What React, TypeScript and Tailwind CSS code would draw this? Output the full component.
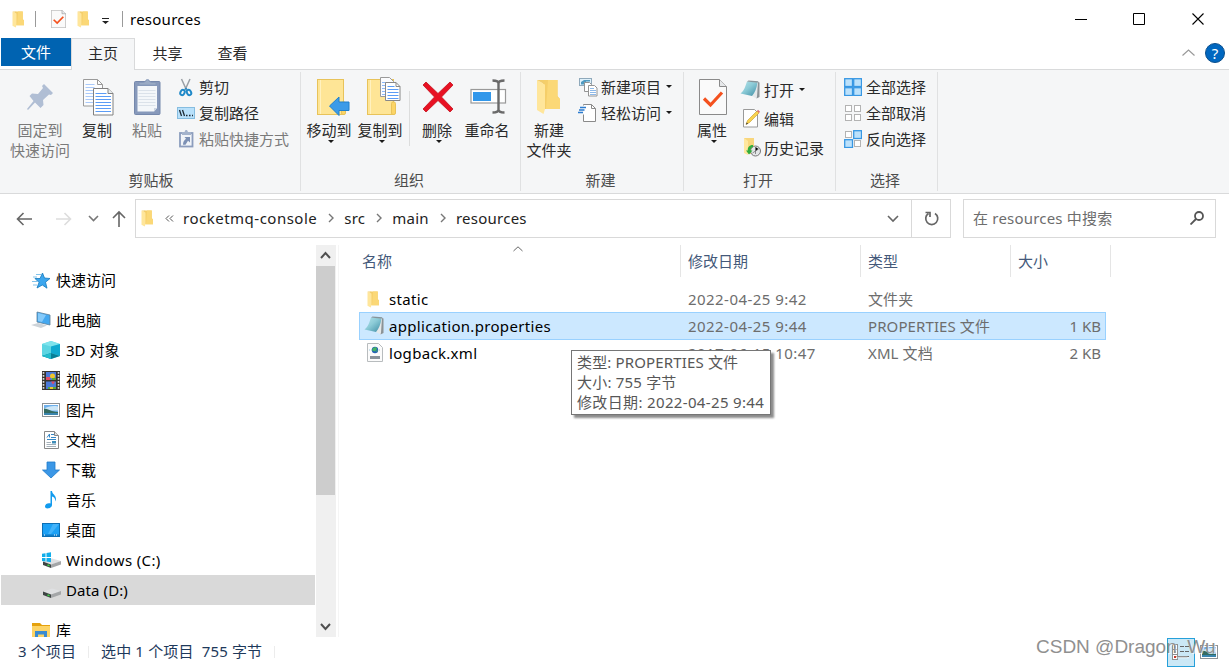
import type { ReactNode } from 'react';
import clsx from 'clsx';

const FolderIcon = ({ className }: { className?: string }) => (
  <svg viewBox="0 0 26 36" preserveAspectRatio="none" className={className}>
    <path d="M7 1h14.5v16l2.500 3v10H7z" fill="#f5ce69" />
    <path d="M12 1h9.500v17l2.500 2v10H10z" fill="#fbd877" />
    <path d="M1 1l8 4.500V30L7.500 35 1 31z" fill="#ffe69b" />
    <path d="M1 1h7l1 4.500z" fill="#f2cd6c" />
  </svg>
);

const PageCheckIcon = ({ className }: { className?: string }) => (
  <svg viewBox="0 0 28 36" preserveAspectRatio="none" className={className}>
    <path d="M.5.500h20l7 7v28H.5z" fill="#fafafa" stroke="#8a8a8a" />
    <path d="M20.500.500v7h7" fill="#e6e8ea" stroke="#8a8a8a" />
    <path d="M5 19.500l6.500 6.500L23 13.500" fill="none" stroke="#f4511e" strokeWidth="3.200" />
  </svg>
);

const PinIcon = () => (
  <svg width="28" height="28" viewBox="0 0 28 28">
    <path d="M18 1l9 9-2 2-2-.5-6 5.500.5 5-3 3-5.500-5.500L2 27l-1-1 6.500-8L3.500 13l2.500-2.500 6 .5L17 5l-1-2z" fill="#b0bed4" />
  </svg>
);

const SheetLines = ({ x, y, w, n, color = '#5b9cf6' }: { x: number; y: number; w: number; n: number; color?: string }) => (
  <>
    {Array.from({ length: n }, (_, i) => (
      <path key={i} d={`M${x} ${y + i * 3}h${w}`} stroke={color} />
    ))}
  </>
);

const CopyIcon = () => (
  <svg width="32" height="38" viewBox="0 0 32 38" fill="none" className="relative left-[2px] top-px">
    <path d="M.5.500h14l5 5v21.500H.5z" fill="#fcfdfe" stroke="#9a9a9a" />
    <path d="M14.500.500v5h5" stroke="#9a9a9a" />
    <SheetLines x={2.5} y={5.5} w={9} n={7} color="#a9c9fa" />
    <path d="M10.500 9.500h14.500l5 5V36H10.500z" fill="#fff" stroke="#808080" />
    <path d="M25 9.500v5h5" fill="#e8ecef" stroke="#808080" />
    <SheetLines x={12.5} y={14.5} w={11} n={1} />
    <SheetLines x={12.5} y={17.5} w={15.5} n={6} />
  </svg>
);

const PasteIcon = () => (
  <svg width="28" height="38" viewBox="0 0 28 38" className="relative left-px">
    <rect x=".5" y="3.500" width="25.500" height="33" rx="1" fill="#8799bb" stroke="#7588ac" />
    <path d="M3.500 8h19.500v22l-3 3.500H3.500z" fill="#f4f7fa" />
    <path d="M20 33.500V30h3z" fill="#cdd6e2" />
    <SheetLines x={4.5} y={12.5} w={17} n={6} color="#dbe2ea" />
    <path d="M5 7V4.500h4.500l2-1a2 2 0 1 1 4 0l2 1H22V7z" fill="#9aabc5" stroke="#8497b8" strokeWidth=".8" />
  </svg>
);

const CutIcon = () => (
  <svg width="18" height="19" viewBox="0 0 18 19" fill="none">
    <path d="M4.500 1l5 11M13 1L8 12" stroke="#9a9fa5" strokeWidth="1.500" />
    <ellipse cx="5.500" cy="14.500" rx="2" ry="2.800" transform="rotate(28 5.500 14.500)" stroke="#2089c8" strokeWidth="2" />
    <ellipse cx="12" cy="14.500" rx="2" ry="2.800" transform="rotate(-28 12 14.500)" stroke="#2089c8" strokeWidth="2" />
    <path d="M7 11.500l2-2 2 2z" fill="#2089c8" />
  </svg>
);

const CopyPathIcon = () => (
  <svg width="18" height="12" viewBox="0 0 18 12" fill="none">
    <rect x=".5" y=".5" width="17" height="11" fill="#b9e1fb" stroke="#86bde0" />
    <path d="M2.500 3l2 6M5.500 3l2 6M9 8.500h1.500M12 8.500h1.500M15 8.500h1" stroke="#1d2a35" strokeWidth="1.300" />
  </svg>
);

const PasteShortcutIcon = () => (
  <svg width="15" height="19" viewBox="0 0 15 19" className="relative -top-px">
    <rect x="1" y="4" width="12.500" height="13.500" fill="#f1f4f8" stroke="#8c9dbd" strokeWidth="1.800" />
    <path d="M3 3h2.500l1-2h1.500l1 2H12v3H3z" fill="#a4b3cc" />
    <path d="M5.500 8h5.500v5.500l-2-1.700-2.500 4H4c0-3 1-4.500 3-6z" fill="#7c90b4" />
  </svg>
);

const FolderBack = () => (
  <>
    <rect x=".5" y="2.500" width="26" height="35" fill="#fee596" stroke="#e8c35a" />
    <path d="M3.500 3v34" stroke="#fff1bf" />
    <rect x="24.500" y="25" width="4" height="12.500" rx="1.500" fill="#fcd567" stroke="#e8c35a" />
  </>
);

const MoveToIcon = () => (
  <svg width="34" height="39" viewBox="0 0 34 39" className="relative -top-[1px] left-[5px]">
    <FolderBack />
    <path d="M12.500 29L22 20v5h10v8.500H22v5z" fill="#3c9be8" stroke="#2180cc" />
  </svg>
);

const CopyToIcon = () => (
  <svg width="34" height="39" viewBox="0 0 34 39" fill="none" className="relative -top-[1px] left-[4px]">
    <FolderBack />
    <path d="M13.500.500h9l4 4V19.500h-13z" fill="#fbfcfe" stroke="#9a9a9a" />
    <SheetLines x={15} y={5.5} w={4} n={5} color="#8db9f8" />
    <path d="M18.500 5.500H29l4 4v14H18.500z" fill="#fff" stroke="#888" />
    <path d="M29 5.500v4h4" stroke="#888" />
    <SheetLines x={20.5} y={9.5} w={7} n={1} />
    <SheetLines x={20.5} y={12.5} w={11} n={4} />
  </svg>
);

const DeleteIcon = () => (
  <svg width="32" height="32" viewBox="0 0 32 32" className="relative left-px">
    <path d="M1 4l3-3 12 11.500L28 1l3 3-11.500 12L31 28l-3 3-12-11.500L4 31l-3-3 11.500-12z" fill="#e81123" stroke="#c4101c" strokeWidth=".8" />
  </svg>
);

const RenameIcon = () => (
  <svg width="37" height="35" viewBox="0 0 37 35" fill="none" className="relative -top-px left-px">
    <rect x="1" y="10.500" width="34.500" height="13.500" fill="#fff" stroke="#999" strokeWidth="1.200" />
    <rect x="3" y="13" width="18" height="9" fill="#3197ea" />
    <path d="M28.500 3v29M22.500 1.500c3 0 6 .5 6 3 0-2.500 3-3 6-3M22.500 33.500c3 0 6-.5 6-3 0 2.500 3 3 6 3" stroke="#6a6a6a" strokeWidth="2.400" />
  </svg>
);

const NewItemIcon = () => (
  <svg width="19" height="19" viewBox="0 0 19 19" fill="none" className="shrink-0">
    <rect x=".5" y=".5" width="12" height="7" fill="#dff1fb" stroke="#8fa9bb" />
    <path d="M2 6.500V4l3-2h6v1.500H7v3z" fill="#4f9ac0" />
    <path d="M5.500 4.500h5l2 2v7h-7z" fill="#fff" stroke="#949494" />
    <path d="M9.500 7.500h6l2.500 2.500v8H9.500z" fill="#fff" stroke="#949494" />
    <path d="M11 10.500h4M11 12.500h6M11 14.500h6M11 16.500h6" stroke="#8db9e8" />
  </svg>
);

const EasyAccessIcon = () => (
  <svg width="19" height="19" viewBox="0 0 19 19" fill="none" className="relative -left-px shrink-0">
    <path d="M5.500 1.500v-1h8l4 4v13h-12v-7" fill="#fff" stroke="#8a8a8a" />
    <path d="M13.500.500v4h4" stroke="#8a8a8a" />
    <path d="M2 3.500h6M1 6h5.500M0 8.500h5" stroke="#2d7cd0" strokeWidth="1.400" />
  </svg>
);

const NotepadIcon = () => (
  <svg width="20" height="19" viewBox="0 0 20 19" className="relative -left-px shrink-0">
    <defs>
      <linearGradient id="notepad" x1="0" y1="0" x2="1" y2="1">
        <stop offset="0" stopColor="#b5e3ea" />
        <stop offset=".45" stopColor="#8ccbd7" />
        <stop offset="1" stopColor="#3d8ca3" />
      </linearGradient>
    </defs>
    <path d="M15 2l4 .5v14.500l-2.500 1.500L12 16z" fill="#e4e8ea" />
    <path d="M18 2l1.500.5v14.500l-3 1.500.5-2z" fill="#8b9296" />
    <path d="M7 1.500l10.500 1C16.500 8.500 15 12.500 12 16L.5 13.500C4.500 10.500 5.500 5.500 7 1.500z" fill="url(#notepad)" />
    <path d="M7 1.500L8.500.500 18.500 1.200 17.500 2.700z" fill="#85949a" />
  </svg>
);

const EditIcon = () => (
  <svg width="18" height="19" viewBox="0 0 18 19" className="relative left-px">
    <path d="M.5.500h11l3 3V18H.5z" fill="#fff" stroke="#9a9a9a" />
    <path d="M3 15.500l1.500-4L14 2l2 2-9.500 9.500z" fill="#f9d24e" stroke="#c39b2b" strokeWidth=".6" />
    <path d="M14 2l1-1.200 2 2L16 4z" fill="#dc6e6e" />
    <path d="M3 15.500l.7-2 1.400 1.300z" fill="#333" />
  </svg>
);

const HistoryIcon = () => (
  <svg width="18" height="19" viewBox="0 0 18 19" className="relative left-px">
    <path d="M1 0h10v16H5l-4-2z" fill="#f8d67d" />
    <path d="M1 0l4 3v14l-4-2z" fill="#ffe79f" />
    <circle cx="12.500" cy="13" r="5" fill="#e3e6e8" stroke="#787878" />
    <path d="M12.500 9v4l3-2M12.500 13l-3 2M12.500 13v3" stroke="#666" strokeWidth=".7" />
    <path d="M10 7c-4 0-5.500 2.500-5.200 5.500H3l3 4 3.500-4H7.500c0-2 .8-3 2.500-3.500z" fill="#30ad3e" />
  </svg>
);

const SelectIcon = ({ on }: { on: boolean[] }) => (
  <svg width="18" height="18" viewBox="0 0 18 18">
    {on.map((active, i) => (
      <rect
        key={i}
        x={(i % 2) * 9 + (active ? 0.7 : 1.5)}
        y={Math.floor(i / 2) * 9 + (active ? 0.7 : 1.5)}
        width={active ? 7.8 : 6}
        height={active ? 7.8 : 6}
        fill={active ? '#bce1fb' : '#fff'}
        stroke={active ? '#3797e3' : '#b3b3b3'}
        strokeWidth={active ? 1.3 : 1}
      />
    ))}
  </svg>
);

const Caret = ({ className }: { className?: string }) => (
  <svg width="6" height="3" viewBox="0 0 6 3" className={className}>
    <path d="M0 0h6L3 3z" fill="#1a1a1a" />
  </svg>
);

type LineProps = { d: string; w: number; h: number; color?: string; stroke?: number; className?: string };

const Line = ({ d, w, h, color = '#5f5f5f', stroke = 1.6, className }: LineProps) => (
  <svg width={w} height={h} viewBox={`0 0 ${w} ${h}`} fill="none" className={clsx('shrink-0', className)}>
    <path d={d} stroke={color} strokeWidth={stroke} />
  </svg>
);

type BigButtonProps = { icon: ReactNode; lines: string[]; className: string; disabled?: boolean; caret?: boolean };

const BigButton = ({ icon, lines, className, disabled, caret }: BigButtonProps) => (
  <button className={clsx('flex shrink-0 flex-col items-center whitespace-nowrap pt-[7px]', disabled && 'text-[#7a7a7a]', className)}>
    <span className="mb-[3px] flex h-10 items-center justify-center">{icon}</span>
    {lines.map((line) => (
      <span key={line} className="h-5 leading-5">{line}</span>
    ))}
    {caret && <Caret className="ml-1" />}
  </button>
);

type SmallButtonProps = { icon: ReactNode; label: string; caret?: boolean; disabled?: boolean; className?: string };

const SmallButton = ({ icon, label, caret, disabled, className = 'h-[26px]' }: SmallButtonProps) => (
  <button className={clsx('flex items-center whitespace-nowrap', disabled && 'text-[#7a7a7a]', className)}>
    <span className="mr-1 flex w-[18px] shrink-0 justify-center">{icon}</span>
    {label}
    {caret && <Caret className="mb-px ml-[5px]" />}
  </button>
);

const Group = ({ label, className, labelClass, children }: { label: string; className: string; labelClass?: string; children: ReactNode }) => (
  <div className={clsx('relative flex shrink-0 flex-col', className)}>
    <div className="flex h-[100px]">{children}</div>
    <div className={clsx('text-center leading-5 text-[#4c4c4c]', labelClass)}>{label}</div>
    <div className="absolute top-[2px] right-0 h-[119px] w-px bg-[#e0e1e2]" />
  </div>
);

const Ribbon = () => (
  <div className="flex h-[125px] border-y border-[#d9dadb] bg-[#f5f6f7] pl-px text-[#2a2a2a]">
    <Group label="剪贴板" className="w-[300px]">
      <BigButton icon={<PinIcon />} lines={['固定到', '快速访问']} className="ml-1 w-[70px]" disabled />
      <BigButton icon={<CopyIcon />} lines={['复制']} className="w-[44px]" />
      <BigButton icon={<PasteIcon />} lines={['粘贴']} className="ml-[3px] w-[50px]" disabled />
      <div className="ml-[5px] pt-1">
        <SmallButton icon={<CutIcon />} label="剪切" />
        <SmallButton icon={<CopyPathIcon />} label="复制路径" />
        <SmallButton icon={<PasteShortcutIcon />} label="粘贴快捷方式" disabled />
      </div>
    </Group>
    <Group label="组织" className="w-[220px]" labelClass="pr-1">
      <BigButton icon={<MoveToIcon />} lines={['移动到']} className="ml-1 w-[48px]" caret />
      <BigButton icon={<CopyToIcon />} lines={['复制到']} className="ml-[3px] w-[48px]" caret />
      <div className="mt-[21px] ml-[5px] h-[55px] w-px bg-[#dcdddd]" />
      <BigButton icon={<DeleteIcon />} lines={['删除']} className="ml-[5px] w-[44px]" caret />
      <BigButton icon={<RenameIcon />} lines={['重命名']} className="ml-[3px] w-[50px]" />
    </Group>
    <Group label="新建" className="w-[163px]" labelClass="pr-1">
      <BigButton icon={<FolderIcon className="h-9 w-[26px]" />} lines={['新建', '文件夹']} className="ml-[2px] w-[52px]" />
      <div className="ml-1 pt-1">
        <SmallButton icon={<NewItemIcon />} label="新建项目" caret />
        <SmallButton icon={<EasyAccessIcon />} label="轻松访问" caret />
      </div>
    </Group>
    <Group label="打开" className="w-[152px]" labelClass="pr-1">
      <BigButton icon={<PageCheckIcon className="relative left-px h-9 w-7" />} lines={['属性']} className="ml-[3px] w-[50px]" caret />
      <div className="ml-[5px] pt-[5px]">
        <SmallButton icon={<NotepadIcon />} label="打开" caret className="h-[29px]" />
        <SmallButton icon={<EditIcon />} label="编辑" className="h-[29px]" />
        <SmallButton icon={<HistoryIcon />} label="历史记录" className="h-[29px]" />
      </div>
    </Group>
    <Group label="选择" className="w-[102px]" labelClass="pr-1">
      <div className="ml-2 pt-1">
        <SmallButton icon={<SelectIcon on={[true, true, true, true]} />} label="全部选择" />
        <SmallButton icon={<SelectIcon on={[false, false, false, false]} />} label="全部取消" />
        <SmallButton icon={<SelectIcon on={[false, true, true, false]} />} label="反向选择" />
      </div>
    </Group>
  </div>
);

const TitleBar = () => (
  <header className="flex h-[38px] items-center pl-3">
    <FolderIcon className="h-[17px] w-[13px]" />
    <i className="ml-[10px] h-4 w-px bg-[#9a9a9a]" />
    <PageCheckIcon className="ml-[15px] h-[18px] w-[15px]" />
    <FolderIcon className="ml-[11px] h-[17px] w-[13px]" />
    <svg width="7" height="6" viewBox="0 0 7 6" className="mt-1 ml-[12px]">
      <path d="M0 0h7v1H0zM0 3h7L3.500 6z" fill="#222" />
    </svg>
    <i className="ml-[13px] h-4 w-px bg-[#9a9a9a]" />
    <span className="ml-[7px] tracking-[0.25px] text-black">resources</span>
    <div className="ml-auto flex items-center">
      <Line d="M0 .5h12" w={12} h={1} stroke={1} color="#000" />
      <Line d="M.5.500h11v11H.5z" w={12} h={12} stroke={1} color="#000" className="ml-[46px]" />
      <Line d="M.5.500l11 11M11.500.500l-11 11" w={12} h={12} stroke={1.1} color="#000" className="mr-[25px] ml-[47px]" />
    </div>
  </header>
);

const Tabs = () => (
  <nav className="flex h-[31px] pl-px text-[#2a2a2a]">
    <div className="h-[28px] w-[70px] bg-[#0063b1] text-center leading-[29px] text-white">文件</div>
    <div className="relative z-10 h-8 w-[64px] border border-b-0 border-[#d9dadb] bg-[#f5f6f7] text-center leading-[29px]">主页</div>
    <div className="w-[65px] text-center leading-[30px]">共享</div>
    <div className="w-[65px] text-center leading-[30px]">查看</div>
    <div className="ml-auto flex h-[29px] items-center pr-1">
      <Line d="M.5 6.500L6.500 1l6 5.500" w={13} h={8} stroke={1.2} color="#999" className="mr-[10px]" />
      <span className="flex size-5 items-center justify-center rounded-full border border-[#0b4f8c] bg-[#0067c0] text-[15px] leading-5 text-white">?</span>
    </div>
  </nav>
);

const crumbs = ['rocketmq-console', 'src', 'main', 'resources'];

const AddressBar = () => (
  <div className="flex h-[51px] items-start pt-[5px] pl-4">
    <div className="flex h-[39px] w-[119px] items-center">
      <Line d="M16 8H1.500M7.500 2l-6 6 6 6" w={16} h={16} color="#666" />
      <Line d="M0 8h14.500M8.500 2l6 6-6 6" w={16} h={16} color="#ddd" className="ml-6" />
      <Line d="M1 1l4.500 4.500L10 1" w={11} h={7} color="#777" className="ml-[16px]" />
      <Line d="M7 17V2M1 8l6-6 6 6" w={14} h={18} color="#666" className="mt-px ml-[13px]" />
    </div>
    <div className="flex h-[39px] w-[816px] items-center border border-[#d9d9d9] text-[#222]">
      <FolderIcon className="ml-[5px] h-[17px] w-[13px]" />
      <Line d="M4 .5L1 3.500l3 3M8 .5L5 3.500l3 3" w={9} h={7} stroke={1} color="#555" className="ml-[11px]" />
      <div className="ml-[9px] flex items-center pb-[2px]">
        {crumbs.map((name, i) => (
          <span key={name} className={clsx('flex items-center', i === 0 ? 'tracking-[0.5px]' : 'tracking-[0.25px]')}>
            {i > 0 && <Line d="M1 1l4 4-4 4" w={6} h={10} color="#777" stroke={1.4} className="mr-[10px] ml-[11px]" />}
            {name}
          </span>
        ))}
      </div>
      <Line d="M1 1l5 5 5-5" w={12} h={8} color="#666" className="mr-[12px] ml-auto" />
      <div className="flex h-full w-[39px] items-center justify-center border-l border-[#d9d9d9]">
        <svg width="16" height="16" viewBox="0 0 16 16" fill="none" stroke="#666" strokeWidth="1.700" className="ml-[2px]">
          <path d="M11 2.500a6 6 0 1 1-6.500 0M1.500 1.500h4.500v4.500" />
        </svg>
      </div>
    </div>
    <div className="ml-3 flex h-[39px] w-[253px] items-center border border-[#d9d9d9] pb-px pl-[9px] text-[#6d6d6d]">
      <span className="tracking-[0.2px]">在 resources 中搜索</span>
      <svg width="14" height="14" viewBox="0 0 14 14" fill="none" stroke="#555" strokeWidth="1.800" className="mr-[11px] ml-auto">
        <circle cx="9" cy="5" r="4" />
        <path d="M6 8l-5.500 5.500" />
      </svg>
    </div>
  </div>
);

const StarIcon = () => (
  <svg width="18" height="17" viewBox="0 0 18 17">
    <path d="M10.500 1l2 5 5.500.5-4.500 3.700 1.500 6-4.700-3.200L5 16l2-5.500L3 6.500h5z" fill="#3ca6ee" stroke="#1379bd" strokeWidth=".8" />
    <path d="M4 2.500h5M1 5h4M0 9.500h5M1 13h4" stroke="#74bce8" strokeWidth=".9" />
  </svg>
);

const PcIcon = () => (
  <svg width="20" height="18" viewBox="0 0 20 18">
    <path d="M6 1l13 3v10L6 11z" fill="#44a8f0" stroke="#5d7f98" strokeWidth=".8" />
    <path d="M7 2l8 2-4 7-4-1z" fill="#85cafa" />
    <path d="M0 14l7-2 9 2.500L10 17z" fill="#cdd3d8" />
  </svg>
);

const CubeIcon = () => (
  <svg width="18" height="18" viewBox="0 0 18 18">
    <path d="M9 0l9 3v12l-9 3-9-3V3z" fill="#5cd5e2" />
    <path d="M0 3l9-3 9 3-9 2.500z" fill="#7ee3ec" />
    <path d="M9 5.500L18 3v12l-9-3z" fill="#0fa9cf" />
    <path d="M0 15l9-3 9 3-9 3z" fill="#067f97" />
    <path d="M0 15l9-3v6z" fill="#22bccd" />
  </svg>
);

const VideoIcon = () => (
  <svg width="18" height="19" viewBox="0 0 18 19">
    <path d="M0 0h18v19H0z" fill="#37342f" />
    <path d="M1.500 1v18M16.500 1v18" stroke="#ddd" strokeWidth="1.600" strokeDasharray="1.700 1.300" />
    <path d="M4 1h10v8H4zM4 10.500h10V18H4z" fill="#4b79d8" />
    <circle cx="10.500" cy="5" r="2.500" fill="#f0c52d" />
    <path d="M4 6h4v3H4zM9 10.500h4l-2 3z" fill="#e34a65" />
    <path d="M10 7h4v2h-4zM6 16h8v2H6z" fill="#58a83d" />
    <path d="M8 16h3v2H8z" fill="#f0c52d" />
  </svg>
);

const PictureIcon = () => (
  <svg width="18" height="14" viewBox="0 0 18 14">
    <rect x=".5" y=".5" width="17" height="13" fill="#fff" stroke="#8d9296" />
    <path d="M2 2h14v10H2z" fill="#6eb0ec" />
    <path d="M2 5.500c4-2 9-3 14-2v4H2z" fill="#cde7f8" />
    <path d="M2 5.500c4 0 6 3 14 3.500v1.500H2z" fill="#346b61" />
    <path d="M2 10h14v2H2z" fill="#3a85ae" />
  </svg>
);

const DocIcon = () => (
  <svg width="15" height="18" viewBox="0 0 15 18">
    <path d="M.5.500h10l4 4v13H.5z" fill="#fff" stroke="#888" />
    <path d="M10.500.500v4h4" fill="#ddd" stroke="#888" />
    <path d="M3 6.500L5.500 3v3.500M7 3.500h3M7 6.500h5M3 8.500h9" fill="none" stroke="#3687c5" />
    <path d="M2.500 11.500h4.500M2.500 13.500h9.500M2.500 15.500h9.500" stroke="#a5b1ba" />
    <path d="M8 10h4v2.500H8z" fill="#3f8db8" />
  </svg>
);

const DownloadIcon = () => (
  <svg width="18" height="18" viewBox="0 0 18 18">
    <path d="M5 1h8v8h4.500L9 17 .5 9H5z" fill="#3b97e6" stroke="#1f7bca" strokeWidth=".8" />
  </svg>
);

const MusicIcon = () => (
  <svg width="18" height="18" viewBox="0 0 18 18">
    <path d="M8.500 0h1.500c.5 4 5.500 4.500 3.500 10.500-.2-3-1.500-4.500-3.500-5V14c0 3.500-7 4.800-7 1.500 0-2.500 3-3.800 5.500-3z" fill="#129bee" />
  </svg>
);

const DesktopIcon = () => (
  <svg width="18" height="14" viewBox="0 0 18 14">
    <rect x=".5" y=".5" width="17" height="13" fill="#1da1f5" stroke="#0c6fb5" />
    <path d="M11 1h6L9 11H6z" fill="#43b3fa" />
    <path d="M1 11.500h16V13H1z" fill="#0f7cc8" />
    <path d="M2 12h1M12 12h1M14 12h1" stroke="#fff" />
  </svg>
);

const DriveIcon = ({ win }: { win?: boolean }) => (
  <svg width="19" height="18" viewBox="0 0 19 18">
    <path d="M1 10.500l9-3 9 2.500-9 3.500z" fill="#dfe0e2" />
    <path d="M1 10.500l8 3V17l-8-3z" fill="#3e4444" />
    <path d="M9 13.500l10-3.500v3.500L9 17z" fill="#a4a6a8" />
    <path d="M5.500 14l2 .7" stroke="#3fd348" strokeWidth="1.500" />
    {win && <path d="M0 2.700l3.500-.5V6H0zM4.500 2L9 1.200V6H4.500zM0 7h3.500v3.500L0 10zM4.500 7H9v4.300l-4.500-.7z" fill="#12aeea" />}
  </svg>
);

const LibraryIcon = () => (
  <svg width="18" height="17" viewBox="0 0 18 17">
    <path d="M0 1h8l2 2h8v2H0z" fill="#e5a10d" />
    <path d="M0 4h18v13H0z" fill="#fdd466" />
    <path d="M3 17V9h12v8h-3v-4.500H6V17z" fill="#3a8bd0" />
  </svg>
);

const devices = [
  { label: '3D 对象', icon: <CubeIcon /> },
  { label: '视频', icon: <VideoIcon /> },
  { label: '图片', icon: <PictureIcon /> },
  { label: '文档', icon: <DocIcon /> },
  { label: '下载', icon: <DownloadIcon /> },
  { label: '音乐', icon: <MusicIcon /> },
  { label: '桌面', icon: <DesktopIcon /> },
  { label: 'Windows (C:)', icon: <DriveIcon win />, spacing: 'tracking-[0.35px]' },
  { label: 'Data (D:)', icon: <DriveIcon />, spacing: 'tracking-[0.1px]', active: true },
];

type NavItemProps = { label: string; icon: ReactNode; active?: boolean; root?: boolean; spacing?: string };

const NavItem = ({ label, icon, active, root, spacing }: NavItemProps) => (
  <div className={clsx('flex h-[30px] shrink-0 items-center text-black', root ? 'pl-[30px]' : 'pl-[40px]', active && 'bg-[#d9d9d9]')}>
    <span className="mr-[5px] flex w-5 shrink-0 justify-center">{icon}</span>
    <span className={clsx('pb-px', spacing)}>{label}</span>
  </div>
);

const Sidebar = () => (
  <aside className="flex h-[392px] w-[339px] shrink-0 overflow-hidden border-r border-[#f5f5f5] pl-px">
    <div className="mr-px flex w-[314px] flex-col overflow-hidden pt-5">
      <NavItem label="快速访问" icon={<StarIcon />} root />
      <div className="h-[10px] shrink-0" />
      <NavItem label="此电脑" icon={<PcIcon />} root />
      {devices.map((item) => (
        <NavItem key={item.label} {...item} />
      ))}
      <div className="h-[10px] shrink-0" />
      <NavItem label="库" icon={<LibraryIcon />} root />
    </div>
    <div className="flex w-5 flex-col bg-[#f0f0f0]">
      <div className="flex h-[21px] items-center justify-center pr-[2px]">
        <Line d="M1 7l4.500-5L10 7" w={11} h={9} stroke={2} color="#505050" />
      </div>
      <div className="h-[229px] w-[19px] bg-[#cdcdcd]" />
      <div className="mt-auto flex h-[21px] items-center justify-center pr-[2px]">
        <Line d="M1 2l4.500 5L10 2" w={11} h={9} stroke={2} color="#505050" />
      </div>
    </div>
  </aside>
);

const XmlIcon = () => (
  <svg width="16" height="19" viewBox="0 0 16 19" className="relative -top-px">
    <path d="M.5.500h11l4 4v14H.5z" fill="#fbfbfb" stroke="#b8bcbe" />
    <path d="M2 7h12" stroke="#9ccbe0" strokeDasharray="1 1" />
    <circle cx="8" cy="7" r="3.200" fill="#2463b4" />
    <path d="M6 5l3-1 1 2-2 2.500-3-1zM9 8l2-1-1 2z" fill="#43b562" />
    <path d="M3 13h10v3H3z" fill="#8a939b" />
  </svg>
);

const files = [
  { name: 'static', date: '2022-04-25 9:42', type: '文件夹', size: '', icon: <FolderIcon className="relative -left-px h-[17px] w-[13px]" /> },
  { name: 'application.properties', date: '2022-04-25 9:44', type: 'PROPERTIES 文件', size: '1 KB', icon: <NotepadIcon />, active: true },
  { name: 'logback.xml', date: '2017-06-15 10:47', type: 'XML 文档', size: '2 KB', icon: <XmlIcon /> },
];

const FileList = () => (
  <main className="relative flex-1 pl-5">
    <div className="flex h-8 text-[#44597a]">
      <div className="relative w-[322px] border-r border-[#e5e5e5] pl-[3px] leading-8">
        名称
        <Line d="M.5 5L5 .8 9.500 5" w={10} h={6} stroke={1} color="#666" className="absolute top-[1px] left-[154px]" />
      </div>
      <div className="w-[180px] border-r border-[#e5e5e5] pl-[7px] leading-8">修改日期</div>
      <div className="w-[150px] border-r border-[#e5e5e5] pl-[7px] leading-8">类型</div>
      <div className="w-[100px] border-r border-[#e5e5e5] pl-[7px] leading-8">大小</div>
    </div>
    <div className="mt-2 w-[747px]">
      {files.map((file) => (
        <div
          key={file.name}
          className={clsx(
            'flex items-center border whitespace-nowrap text-[#6d6d6d]',
            file.active ? '-mb-px h-[28px] border-[#99d1ff] bg-[#cce8ff] pb-px' : 'h-[27px] border-transparent pt-px',
          )}
        >
          <span className="flex w-[29px] items-center justify-center">{file.icon}</span>
          <span className="w-[299px] tracking-[0.32px] text-black">{file.name}</span>
          <span className="w-[180px] tracking-[0.45px]">{file.date}</span>
          <span className="w-[150px] tracking-[0.1px]">{file.type}</span>
          <span className="flex-1 pr-1 text-right">{file.size}</span>
        </div>
      ))}
    </div>
    <div className="absolute top-[105px] left-[232px] h-[65px] w-[200px] border border-[#767676] bg-white pt-px pl-[5px] leading-5 whitespace-nowrap text-[#575757] shadow-[3px_3px_2px_rgba(0,0,0,0.45)]">
      <div className="tracking-[0.15px]">类型: PROPERTIES 文件</div>
      <div className="tracking-[0.2px]">大小: 755 字节</div>
      <div className="tracking-[0.35px]">修改日期: 2022-04-25 9:44</div>
    </div>
  </main>
);

const DetailsViewIcon = () => (
  <svg width="18" height="16" viewBox="0 0 18 16">
    {[0, 5, 10].map((y, i) => (
      <g key={y}>
        <rect x=".5" y={y + 0.5} width="5" height="5" fill="#fff" stroke="#8f8f8f" />
        <path d={`M2 ${y + 3}h2`} stroke={['#2d7dc4', '#8a8b25', '#c43a2d'][i]} strokeWidth="2" />
        <path d={`M8 ${y + 2.5}h4M13 ${y + 2.5}h4`} stroke="#666" />
      </g>
    ))}
  </svg>
);

const StatusBar = () => (
  <footer className="relative flex h-[30px] items-center text-[#1e395b]">
    <span className="w-[88px] pb-[2px] pl-[18px] tracking-[0.1px] whitespace-nowrap">3 个项目</span>
    <i className="h-3 w-px bg-[#ececec]" />
    <span className="w-[185px] pb-[2px] pl-[12px] tracking-[0.15px] whitespace-pre">选中 1 个项目  755 字节</span>
    <i className="h-3 w-px bg-[#ececec]" />
    <div className="mr-[11px] ml-auto flex items-center">
      <span className="flex h-[29px] w-[28px] items-center justify-center border border-[#26a0da] bg-[#cbe8f6]">
        <DetailsViewIcon />
      </span>
      <span className="mb-px ml-[5px]"><PictureIcon /></span>
    </div>
    <span className="absolute top-[-1px] left-[1036px] font-['Liberation_Sans',sans-serif] text-[19px] leading-[22px] whitespace-nowrap text-[#909090] [text-shadow:1px_1px_0_#ffffffb0]">
      CSDN @Dragon_Wu
    </span>
  </footer>
);

export default function App() {
  return (
    <div className="flex h-[667px] w-[1229px] flex-col overflow-hidden bg-white font-['Noto_Sans','Noto_Sans_CJK_SC',sans-serif] text-[15px] leading-5">
      <TitleBar />
      <Tabs />
      <Ribbon />
      <AddressBar />
      <div className="flex h-[392px]">
        <Sidebar />
        <FileList />
      </div>
      <StatusBar />
    </div>
  );
}
